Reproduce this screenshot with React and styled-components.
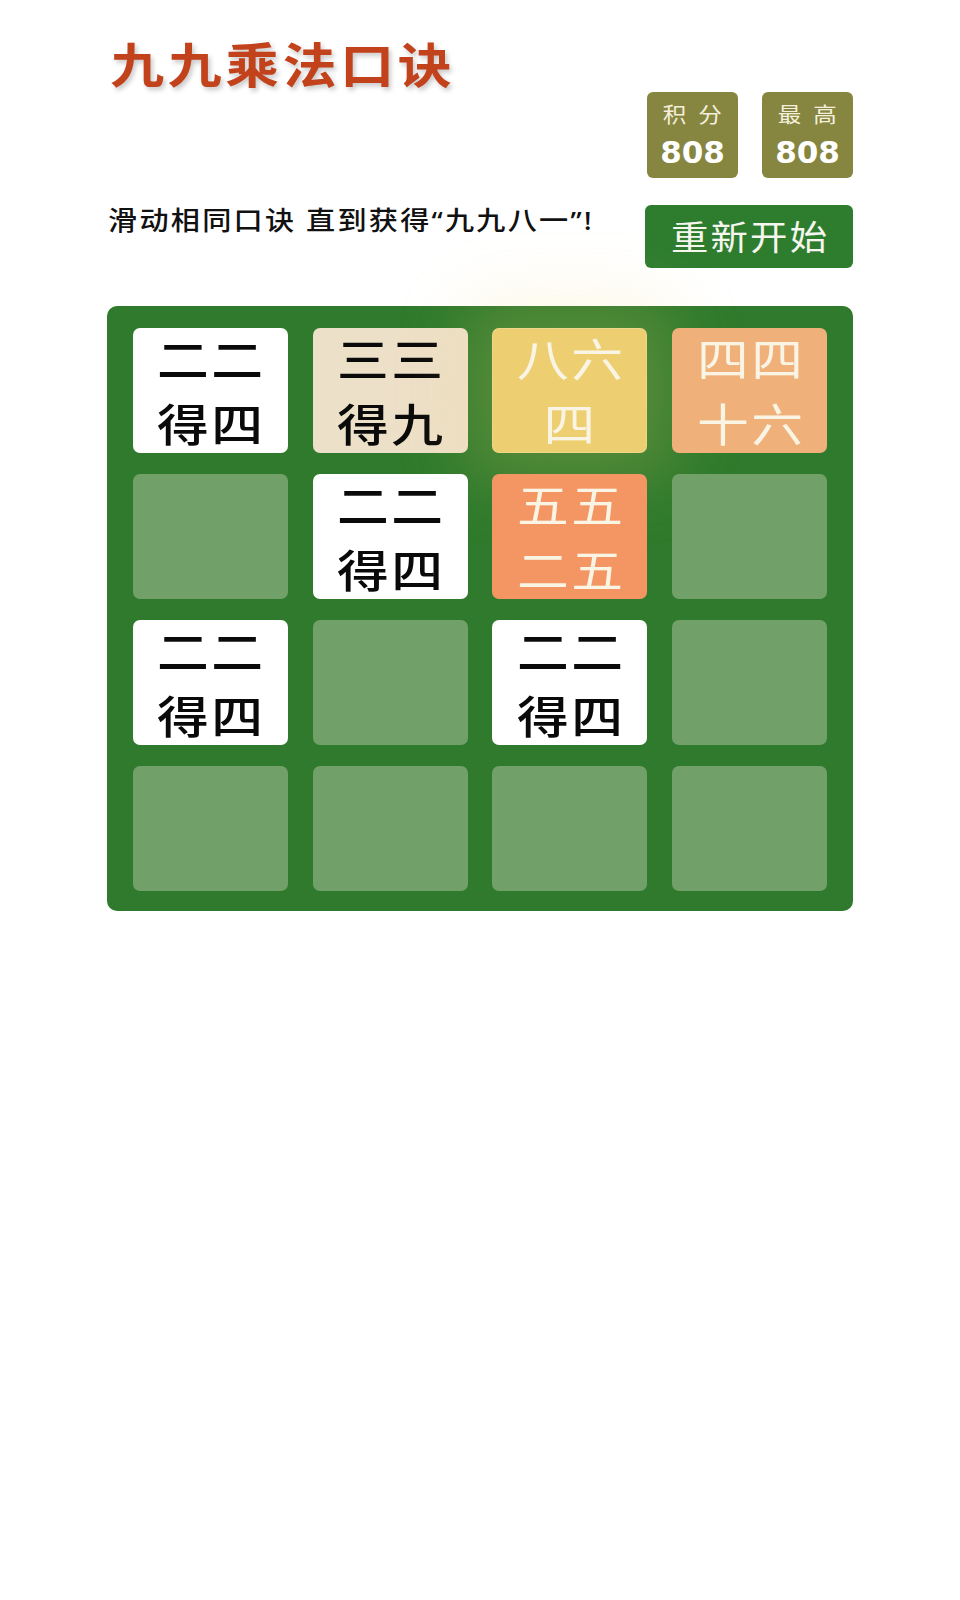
import React from "react";
import styled, { createGlobalStyle, css } from "styled-components";

const Global = createGlobalStyle`
  html, body { margin: 0; padding: 0; background: #ffffff; }
  body { font-family: "Noto Sans CJK SC", "Noto Sans", sans-serif; }
`;

/* the reference face is flat and wide; widen Noto CJK glyphs a little */
const wide = (k, origin = "left center") => css`
  display: inline-block;
  transform: scaleX(${k});
  transform-origin: ${origin};
`;

const Page = styled.div`
  width: 746px;
  margin-left: 107px;
  padding-top: 32px;
`;

const Title = styled.h1`
  margin: 0;
  font-size: 48px;
  line-height: 60px;
  font-weight: 600;
  letter-spacing: 3.3px;
  padding-left: 3px;
  color: #c2421c;
  text-shadow: 2px 3px 5px rgba(0, 0, 0, 0.22);
  ${wide(1.12)}
`;

const ScoreRow = styled.div`
  display: flex;
  justify-content: flex-end;
  gap: 24px;
`;

const ScoreBox = styled.div`
  width: 91px;
  height: 86px;
  border-radius: 6px;
  background: #878640;
  display: flex;
  flex-direction: column;
  align-items: center;
  padding-top: 8px;
  box-sizing: border-box;
`;

const ScoreLabel = styled.div`
  font-size: 21px;
  line-height: 26px;
  color: #f3efdc;
  letter-spacing: 3px;
  padding-left: 3px;
  ${wide(1.12, "center")}
`;

const ScoreValue = styled.div`
  font-family: "DejaVu Sans", "Liberation Sans", sans-serif;
  font-weight: 700;
  font-size: 31px;
  line-height: 42px;
  margin-top: 5px;
  color: #ffffff;
`;

const IntroRow = styled.div`
  display: flex;
  justify-content: space-between;
  align-items: flex-start;
  margin-top: 27px;
`;

const Intro = styled.p`
  margin: 0;
  padding-left: 1px;
  font-family: "Noto Sans", "Noto Sans CJK SC", sans-serif;
  font-size: 26px;
  line-height: 30px;
  font-weight: 500;
  letter-spacing: 2px;
  color: #111111;
  ${wide(1.12)}
`;

const RestartButton = styled.button`
  width: 208px;
  height: 63px;
  border: none;
  border-radius: 6px;
  background: #2e7d2f;
  color: #f6f6ef;
  font-family: "Noto Sans CJK SC", "Noto Sans", sans-serif;
  font-size: 34px;
  padding: 0 0 3px 0;
  cursor: pointer;
`;

const ButtonText = styled.span`
  letter-spacing: 2px;
  padding-left: 2px;
  ${wide(1.1, "center")}
`;

const Board = styled.div`
  margin-top: 38px;
  background: #2f7a2c;
  border-radius: 10px;
  padding: 22px 26px 20px 26px;
  display: grid;
  grid-template-columns: repeat(4, 155px);
  grid-auto-rows: 125px;
  column-gap: 24.7px;
  row-gap: 21px;
`;

const palette = {
  empty: { bg: "#72a069", fg: "transparent", w: 400 },
  4: { bg: "#ffffff", fg: "#0a0a0a", w: 500 },
  9: { bg: "#ede0c8", fg: "#0a0a0a", w: 500 },
  64: { bg: "#edcf72", fg: "#faf4e4", w: 400 },
  16: { bg: "#f0b07a", fg: "#faf4e4", w: 400 },
  25: { bg: "#f39664", fg: "#faf4e4", w: 400 },
};

const Tile = styled.div`
  border-radius: 7px;
  background: ${(p) => palette[p.$kind].bg};
  color: ${(p) => palette[p.$kind].fg};
  font-weight: ${(p) => palette[p.$kind].w};
  display: flex;
  flex-direction: column;
  align-items: center;
  justify-content: center;
  font-size: 45px;
  line-height: 65px;
  padding-bottom: 1px;
  box-sizing: border-box;
  position: relative;
  ${(p) =>
    p.$glow
      ? "box-shadow: 0 0 70px 26px rgba(243, 215, 116, 0.22), inset 0 0 0 1px rgba(255, 255, 255, 0.16);"
      : ""}
`;

const Line = styled.span`
  white-space: nowrap;
  letter-spacing: 2px;
  padding-left: 2px;
  ${wide(1.15, "center")}
`;

const tiles = [
  { k: 4, t: ["二二", "得四"] },
  { k: 9, t: ["三三", "得九"] },
  { k: 64, t: ["八六", "四"], glow: true },
  { k: 16, t: ["四四", "十六"] },
  { k: "empty" },
  { k: 4, t: ["二二", "得四"] },
  { k: 25, t: ["五五", "二五"] },
  { k: "empty" },
  { k: 4, t: ["二二", "得四"] },
  { k: "empty" },
  { k: 4, t: ["二二", "得四"] },
  { k: "empty" },
  { k: "empty" },
  { k: "empty" },
  { k: "empty" },
  { k: "empty" },
];

export default function App() {
  return (
    <>
      <Global />
      <Page>
        <Title>九九乘法口诀</Title>
        <ScoreRow>
          <ScoreBox>
            <ScoreLabel>积 分</ScoreLabel>
            <ScoreValue>808</ScoreValue>
          </ScoreBox>
          <ScoreBox>
            <ScoreLabel>最 高</ScoreLabel>
            <ScoreValue>808</ScoreValue>
          </ScoreBox>
        </ScoreRow>
        <IntroRow>
          <Intro>滑动相同口诀 直到获得“九九八一”!</Intro>
          <RestartButton>
            <ButtonText>重新开始</ButtonText>
          </RestartButton>
        </IntroRow>
        <Board>
          {tiles.map((tile, i) => (
            <Tile key={i} $kind={tile.k} $glow={tile.glow}>
              {tile.t && tile.t.map((l, j) => <Line key={j}>{l}</Line>)}
            </Tile>
          ))}
        </Board>
      </Page>
    </>
  );
}
